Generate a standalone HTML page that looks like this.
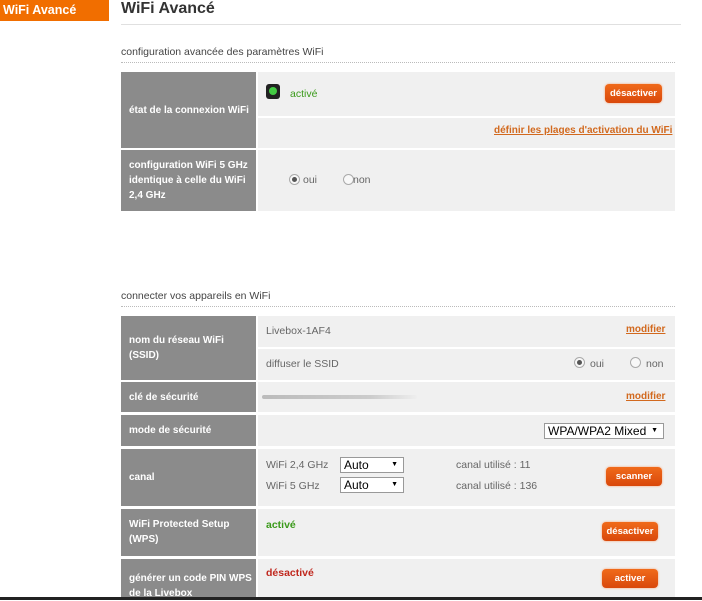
<!DOCTYPE html>
<html><head><meta charset="utf-8"><style>
body{margin:0;width:702px;height:600px;background:#fff;position:relative;overflow:hidden;font-family:"Liberation Sans",Arial,sans-serif;font-size:10.5px;color:#666}
.a{position:absolute}
.lab{position:absolute;left:121px;width:135px;background:#8b8b8b;color:#fff;font-weight:bold;font-size:10px;line-height:15px;box-sizing:border-box;padding-left:8px;padding-right:2px;display:flex;align-items:center}
.c{position:absolute;left:258px;width:417px;background:#f0f0f0}
.btn{position:absolute;background:linear-gradient(#f06a1a,#d9480b);color:#fff;font-weight:bold;font-size:9.5px;border-radius:4px;text-align:center;line-height:19px;height:19px;box-shadow:0 0 2px #f7a070}
.lnk{position:absolute;color:#d2691e;text-decoration:underline;font-weight:bold;font-size:10px}
.dot{position:absolute;left:121px;width:554px;border-top:1px dotted #bbb}
.sel{position:absolute;background:#fff;border:1px solid #999;color:#000;font-size:12px;height:14px;line-height:14px;padding-left:3px;box-sizing:content-box}
.sel:after{content:"▼";position:absolute;right:5px;font-size:7px}
.rad{position:absolute;width:9px;height:9px;border:1px solid #aaa;border-radius:50%;background:#f8f8f8}
.rad.on:after{content:"";position:absolute;left:2px;top:2px;width:5px;height:5px;border-radius:50%;background:#555}
</style></head><body>
<div class="a" style="left:0;top:0;width:109px;height:21px;background:#f16e00;color:#fff;font-weight:bold;font-size:12.5px;line-height:20px;padding-left:3px;box-sizing:border-box">WiFi Avancé</div>
<div class="a" style="left:121px;top:0;font-size:16px;font-weight:bold;color:#333">WiFi Avancé</div>
<div class="a" style="left:121px;top:24px;width:560px;height:1px;background:#e0e0e0"></div>
<div class="a" style="left:121px;top:46px;color:#444">configuration avancée des paramètres WiFi</div>
<div class="dot" style="top:62px"></div>

<div class="lab" style="top:72px;height:76px">état de la connexion WiFi</div>
<div class="c" style="top:72px;height:44px"></div>
<div class="a" style="left:266px;top:84px;width:14px;height:15px;background:#222;border-radius:3px"><div class="a" style="left:3px;top:3px;width:8px;height:8px;border-radius:50%;background:#4c4"></div></div>
<div class="a" style="left:290px;top:88px;color:#3a9a1a">activé</div>
<div class="btn" style="left:605px;top:84px;width:57px">désactiver</div>
<div class="c" style="top:118px;height:30px"></div>
<div class="lnk" style="left:494px;top:125px">définir les plages d'activation du WiFi</div>

<div class="lab" style="top:150px;height:61px">configuration WiFi 5 GHz identique à celle du WiFi 2,4 GHz</div>
<div class="c" style="top:150px;height:61px"></div>
<div class="rad on" style="left:289px;top:174px"></div><div class="a" style="left:303px;top:174px">oui</div>
<div class="rad" style="left:343px;top:174px"></div><div class="a" style="left:353px;top:174px">non</div>

<div class="a" style="left:121px;top:290px;color:#444">connecter vos appareils en WiFi</div>
<div class="dot" style="top:306px"></div>

<div class="lab" style="top:316px;height:64px">nom du réseau WiFi (SSID)</div>
<div class="c" style="top:316px;height:31px"></div>
<div class="a" style="left:266px;top:325px">Livebox-1AF4</div>
<div class="lnk" style="left:626px;top:324px">modifier</div>
<div class="c" style="top:349px;height:31px"></div>
<div class="a" style="left:266px;top:358px">diffuser le SSID</div>
<div class="rad on" style="left:574px;top:357px"></div><div class="a" style="left:590px;top:358px">oui</div>
<div class="rad" style="left:630px;top:357px"></div><div class="a" style="left:646px;top:358px">non</div>

<div class="lab" style="top:382px;height:30px">clé de sécurité</div>
<div class="c" style="top:382px;height:30px"></div>
<div class="a" style="left:262px;top:395px;width:155px;height:4px;background:linear-gradient(90deg,#bbb,#ccc 70%,#eee);border-radius:2px"></div>
<div class="lnk" style="left:626px;top:391px">modifier</div>

<div class="lab" style="top:415px;height:31px">mode de sécurité</div>
<div class="c" style="top:415px;height:31px"></div>
<div class="sel" style="left:544px;top:423px;width:115px">WPA/WPA2 Mixed</div>

<div class="lab" style="top:449px;height:57px">canal</div>
<div class="c" style="top:449px;height:57px"></div>
<div class="a" style="left:266px;top:459px">WiFi 2,4 GHz</div>
<div class="sel" style="left:340px;top:457px;width:59px">Auto</div>
<div class="a" style="left:266px;top:480px">WiFi 5 GHz</div>
<div class="sel" style="left:340px;top:477px;width:59px">Auto</div>
<div class="a" style="left:456px;top:459px">canal utilisé : 11</div>
<div class="a" style="left:456px;top:480px">canal utilisé : 136</div>
<div class="btn" style="left:606px;top:467px;width:56px">scanner</div>

<div class="lab" style="top:509px;height:47px;align-items:flex-start;padding-top:8px">WiFi Protected Setup (WPS)</div>
<div class="c" style="top:509px;height:47px"></div>
<div class="a" style="left:266px;top:519px;color:#3a9a1a;font-weight:bold">activé</div>
<div class="btn" style="left:602px;top:522px;width:56px">désactiver</div>

<div class="lab" style="top:559px;height:41px;align-items:flex-start;padding-top:12px">générer un code PIN WPS de la Livebox</div>
<div class="c" style="top:559px;height:41px"></div>
<div class="a" style="left:266px;top:567px;color:#c0281e;font-weight:bold">désactivé</div>
<div class="btn" style="left:602px;top:569px;width:56px">activer</div>

<div class="a" style="left:0;top:597px;width:702px;height:3px;background:#222"></div>
</body></html>
